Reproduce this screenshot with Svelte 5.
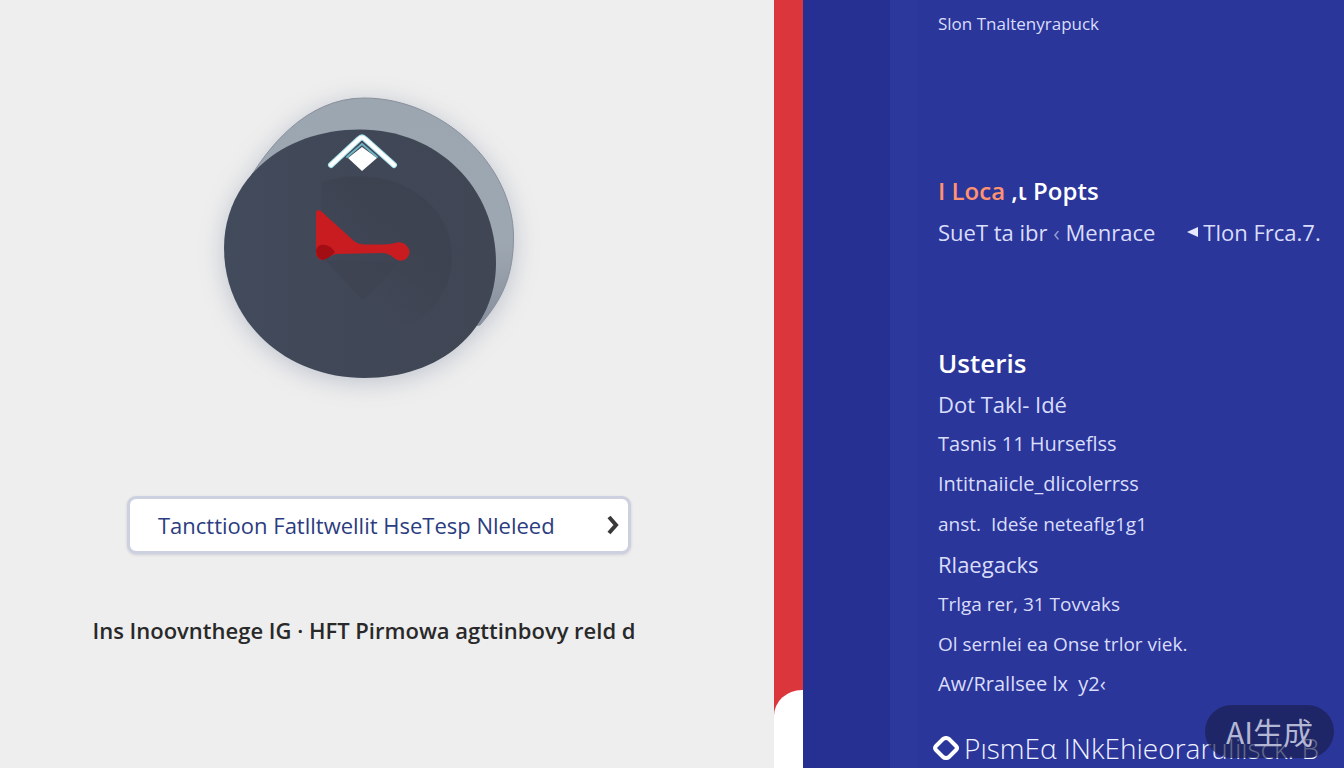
<script lang="ts">
	const links = [
		{ label: 'Dot Takl- Idé', size: 'large' },
		{ label: 'Tasnis 11 Hurseflss', size: 'medium' },
		{ label: 'Intitnaiicle_dlicolerrss', size: 'medium' },
		{ label: 'anst.  Ideše neteaflg1g1', size: 'compact' },
		{ label: 'Rlaegacks', size: 'large' },
		{ label: 'Trlga rer, 31 Tovvaks', size: 'compact' },
		{ label: 'Ol sernlei ea Onse trlor viek.', size: 'compact' },
		{ label: 'Aw/Rrallsee lx  y2‹', size: 'medium' }
	];
</script>

<div class="page">
	<main class="hero">
		<svg class="emblem" viewBox="199 80 360 320" aria-hidden="true">
			<defs>
				<linearGradient id="back" x1="0" y1="0" x2="0" y2="1">
					<stop offset="0" stop-color="#9ba6b0" />
					<stop offset="0.6" stop-color="#9da7b1" />
					<stop offset="1" stop-color="#858b9a" />
				</linearGradient>
				<linearGradient id="face" x1="0" y1="0" x2="1" y2="0">
					<stop offset="0" stop-color="#424b5c" />
					<stop offset="0.5" stop-color="#404756" />
					<stop offset="1" stop-color="#404654" />
				</linearGradient>
				<linearGradient id="dial" x1="0.1" y1="0.9" x2="0.7" y2="0.1">
					<stop offset="0.2" stop-color="#3d4250" stop-opacity="0" />
					<stop offset="0.8" stop-color="#3d4250" stop-opacity="0.9" />
				</linearGradient>
			</defs>
			<g class="disc">
				<path
					d="M247 183C266 150 305 98 364 98C443 98 513.500 166 513.500 237C513.500 276 502 300 480 325L360 340Z"
					fill="url(#back)"
					stroke="#89909d"
				/>
				<path
					d="M360 129.500C438 129.500 496 188 496 263C496 331 440 378 364 378C286 378 224 322 224 248C224 181 281 129.500 360 129.500Z"
					fill="url(#face)"
				/>
			</g>
			<path d="M321 182C390 161 452 200 452 257C452 290 432 315 405 328L321 328Z" fill="url(#dial)" />
			<path d="M325 260L363 301L400 262Z" fill="#3d4250" opacity="0.6" />
			<path d="M331 165L359 139Q362 136 365 139L394 165" class="chevron-edge" />
			<path d="M331 165L359 139Q362 136 365 139L394 165" class="chevron" />
			<path d="M362 147L377 158L362 171L348 158Z" fill="#fff" />
			<path d="M347 157L362 144L377 157" class="chevron-line" />
			<path
				d="M316 212Q318 208 322 212L354 241Q359 245 367 244.500L384 244.500Q391 244 395 243Q402 241 406 245Q413 252 406 259Q400 263 394 258Q389 253 382 253L336 254L320 260L316 255Z"
				fill="#c81c21"
			/>
			<path d="M316 250Q318 244 325 245Q331 246 335 252Q330 258 323 260Q316 259 316 250Z" fill="#a30e15" />
		</svg>

		<button class="cta" type="button">
			<span>Tancttioon Fatlltwellit HseTesp Nleleed</span>
			<svg class="cta-arrow" viewBox="0 0 14 20" aria-hidden="true">
				<path d="M3 2L10 10L3 18" />
			</svg>
		</button>

		<p class="caption">Ins Inoovnthege IG · HFT Pirmowa agttinbovy reld d</p>
	</main>

	<div class="divider"><div class="divider-tab"></div></div>

	<aside class="sidebar">
		<div class="stripe"></div>
		<nav class="menu">
			<a href="#top" class="small">Slon Tnaltenyrapuck</a>

			<section class="posts">
				<h2 class="posts-title"><span class="accent">I Loca</span> ,ι Popts</h2>
				<div class="row">
					<a href="#menrace">SueT ta ibr <span class="faint">‹</span> Menrace</a>
					<a href="#frca" class="back-link">
						<svg viewBox="0 0 12 12" aria-hidden="true"><path d="M0 6L11 1V11Z" /></svg>
						Tlon Frca.7.
					</a>
				</div>
			</section>

			<section>
				<h2>Usteris</h2>
				<ul>
					{#each links as link}
						<li><a href="#list" class={link.size}>{link.label}</a></li>
					{/each}
				</ul>
			</section>

			<a href="#brand" class="brand">
				<svg viewBox="0 0 28 24" aria-hidden="true">
					<path d="M11 3Q14 1 17 3L24 10Q26 12 24 14L17 21Q14 23 11 21L4 14Q2 12 4 10Z" />
				</svg>
				PısmEα INkEhieoraruIiısck. B
			</a>
		</nav>
	</aside>

	<div class="badge">AI生成</div>
</div>

<style>
	:global(body) {
		margin: 0;
		background: #eeeeee;
	}

	.page {
		position: relative;
		display: grid;
		grid-template-columns: 774fr 29px 541fr;
		min-height: 100vh;
		overflow: hidden;
		font-family: 'Open Sans', 'Noto Sans', sans-serif;
	}

	.hero {
		display: flex;
		flex-direction: column;
		align-items: center;
		padding: 80px 16px 0 0;
		background: #eeeeee;
	}

	.emblem {
		width: 360px;
		height: 320px;
		overflow: visible;
	}

	.disc {
		filter: drop-shadow(0 4px 12px rgba(80, 95, 130, 0.3));
	}

	.chevron-edge,
	.chevron,
	.chevron-line {
		fill: none;
		stroke-linecap: round;
	}

	.chevron-edge {
		stroke: #a5e2ee;
		stroke-width: 6;
	}

	.chevron {
		stroke: #fff;
		stroke-width: 4;
	}

	.chevron-line {
		stroke: #6fb5c4;
		stroke-width: 2;
	}

	.cta {
		display: flex;
		align-items: center;
		justify-content: space-between;
		box-sizing: border-box;
		width: 504px;
		max-width: 100%;
		height: 58px;
		margin-top: 96px;
		padding: 0 8px 0 28px;
		border: 3px solid #cdd0df;
		border-radius: 9px;
		background: #fff;
		box-shadow: 0 1px 3px rgba(80, 90, 130, 0.2);
		color: #2b3c80;
		font: 500 22px 'Open Sans', 'Noto Sans', sans-serif;
		white-space: nowrap;
	}

	.cta-arrow {
		width: 14px;
		height: 20px;
		fill: none;
		stroke: #3b3938;
		stroke-width: 4;
	}

	.caption {
		margin: 56px 30px 0 0;
		color: #292929;
		font-size: 22px;
		font-weight: 600;
		line-height: 40px;
		white-space: nowrap;
	}

	.divider {
		display: flex;
		flex-direction: column;
		justify-content: flex-end;
		background: #dc363d;
	}

	.divider-tab {
		height: 78px;
		border-top-left-radius: 28px 26px;
		background: #fff;
	}

	.sidebar {
		display: grid;
		grid-template-columns: 87px 28px 1fr;
		background: #2b369b;
	}

	.stripe {
		grid-column: 1 / 3;
		background: linear-gradient(to right, #253092 87px, #2d389c 87px);
	}

	.menu {
		padding: 4px 0 0 20px;
		line-height: 40px;
		white-space: nowrap;
	}

	.menu a {
		display: block;
		color: #d9ddfa;
		font-size: 22px;
		text-decoration: none;
	}

	.menu a.small {
		font-size: 17px;
	}

	.menu a.compact {
		font-size: 19px;
		white-space: pre;
	}

	.menu a.medium {
		font-size: 20px;
		white-space: pre;
	}

	.posts {
		margin: 128px 0 92px;
	}

	h2 {
		margin: 0;
		color: #fff;
		font-size: 26px;
		font-weight: 600;
		line-height: 38px;
		padding-bottom: 2px;
	}

	.posts-title {
		font-size: 24px;
	}

	.accent {
		color: #ff9270;
	}

	.faint {
		opacity: 0.6;
	}

	.row {
		display: flex;
		gap: 32px;
	}

	.menu .back-link {
		display: flex;
		align-items: center;
		gap: 4px;
	}

	.back-link svg {
		width: 12px;
		height: 12px;
		fill: #e6e9ff;
	}

	ul {
		margin: 0;
		padding: 0;
		list-style: none;
	}

	.menu .brand {
		display: flex;
		align-items: center;
		gap: 4px;
		margin: 24px 0 0 -6px;
		color: #f0f2ff;
		font-size: 28px;
		font-weight: 300;
	}

	.brand svg {
		width: 28px;
		height: 24px;
		fill: none;
		stroke: #fff;
		stroke-width: 4;
	}

	.badge {
		position: absolute;
		right: 10px;
		bottom: 10px;
		width: 129px;
		border-radius: 27px;
		background: rgba(24, 30, 75, 0.65);
		color: #b4b7d4;
		font-family: 'Noto Sans CJK SC', sans-serif;
		font-size: 30px;
		line-height: 53px;
		text-align: center;
	}
</style>
